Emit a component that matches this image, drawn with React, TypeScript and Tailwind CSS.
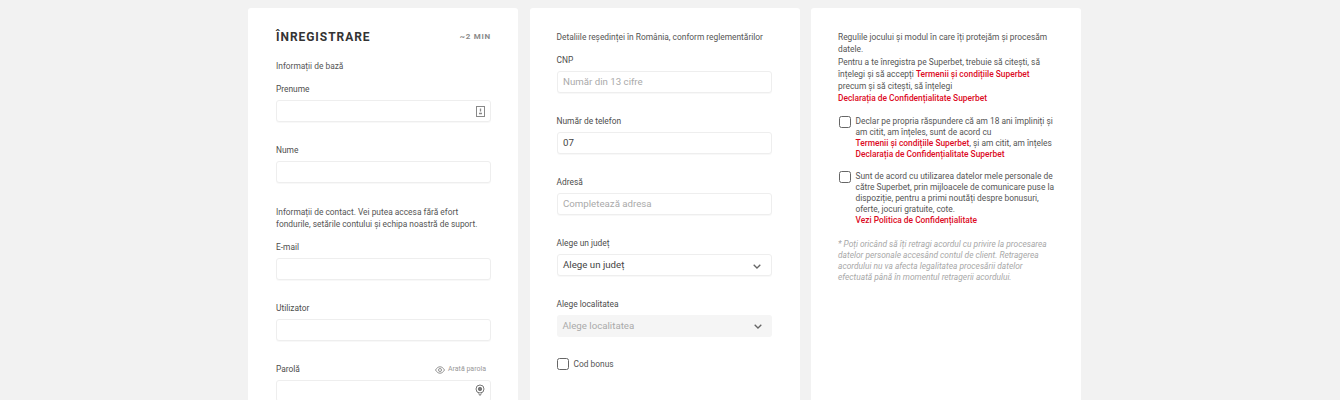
import React from "react";

const inputBase = "flex h-[22px] w-[215px] items-center rounded-[3px] border border-[#eeeeee] bg-white px-[5.5px] text-[9.7px] shadow-[0_1px_1px_rgba(0,0,0,0.03)]";
const labelBase = "mb-[5px] mt-[1px] flex h-[11px] items-center text-[8.4px] leading-[11px] text-[#4d4d4d]";

function Chevron() {
  return (
    <svg width="8" height="5" viewBox="0 0 8 5" className="absolute right-[10px] top-[8.5px]" fill="none" stroke="#666" strokeWidth="1.3">
      <path d="M0.7 0.7L4 4l3.300-3.300" />
    </svg>
  );
}

function Field({ label, children }: { label: string; children?: React.ReactNode }) {
  return (
    <div className="flex h-[61px] w-[215px] flex-col">
      <div className={labelBase}>{label}</div>
      <div className={"relative " + inputBase}>{children}</div>
    </div>
  );
}

function Red({ children }: { children: React.ReactNode }) {
  return <span className="font-medium text-[#dc0a24]">{children}</span>;
}

function Check() {
  return <span className="block h-[11.5px] w-[11.5px] shrink-0 rounded-[2.5px] border-[1.2px] border-[#666] bg-white" />;
}

export default function App() {
  return (
    <div className="h-[400px] w-[1340px] overflow-hidden bg-[#f2f2f2] font-['Roboto',sans-serif]">
      <div className="flex items-start gap-[11.5px] pl-[248px] pt-[8px]">
        {/* Card 1 */}
        <section className="h-[420px] w-[270px] rounded-[3px] bg-white pl-[28px] pt-[22px]">
          <div className="flex h-[14px] w-[215px] items-center justify-between">
            <h1 className="text-[12px] font-bold leading-[14px] tracking-[0.95px] text-[#333]">ÎNREGISTRARE</h1>
            <span className="text-[8px] font-bold tracking-[0.75px] text-[#8a8a8a]">~2 MIN</span>
          </div>
          <p className="mt-[17px] h-[11px] text-[8.4px] leading-[11px] text-[#555]">Informații de bază</p>
          <div className="mt-[11px]">
            <Field label="Prenume">
              <svg width="9" height="11" viewBox="0 0 9 11" className="absolute right-[5.500px] top-[4.500px]" fill="none" stroke="#888" strokeWidth="1">
                <rect x="0.5" y="0.5" width="8" height="10" />
                <path d="M4.500 2.500v3M3 7.500h3" strokeWidth="1.300" />
              </svg>
            </Field>
            <Field label="Nume" />
          </div>
          <p className="h-[24px] w-[215px] pt-[1px] text-[8.4px] leading-[12px] text-[#555]">
            Informații de contact. Vei putea accesa fără efort
            <br />
            fondurile, setările contului și echipa noastră de suport.
          </p>
          <div className="mt-[12px]">
            <Field label="E-mail" />
            <Field label="Utilizator" />
            <div className="relative w-[215px]">
              <span className="absolute right-[5px] top-[1px] flex h-[11px] items-center gap-[3px] text-[7px] text-[#999]">
                <svg width="10" height="8" viewBox="0 0 10 8" fill="none" stroke="#888" strokeWidth="0.9">
                  <path d="M0.5 4C2 1.500 3.500 0.800 5 0.800S8 1.500 9.500 4C8 6.500 6.500 7.200 5 7.200S2 6.500 0.500 4Z" />
                  <circle cx="5" cy="4" r="1.500" />
                </svg>
                Arată parola
              </span>
              <Field label="Parolă">
                <svg width="10" height="12" viewBox="0 0 10 12" className="absolute right-[5px] top-[3px]" fill="none" stroke="#777" strokeWidth="1">
                  <circle cx="5" cy="5" r="4" />
                  <circle cx="5" cy="5" r="1.700" fill="#777" />
                  <path d="M3.500 9.500L5 11.500l1.500-2" />
                </svg>
              </Field>
            </div>
          </div>
        </section>

        {/* Card 2 */}
        <section className="h-[420px] w-[270px] rounded-[3px] bg-white pl-[27px] pt-[24px]">
          <p className="h-[11px] text-[8.4px] leading-[11px] text-[#555]">Detaliile reședinței în România, conform reglementărilor</p>
          <div className="mt-[11px]">
            <Field label="CNP"><span className="text-[#aaa]">Număr din 13 cifre</span></Field>
            <Field label="Număr de telefon"><span className="text-[#444]">07</span></Field>
            <Field label="Adresă"><span className="text-[#aaa]">Completează adresa</span></Field>
            <Field label="Alege un județ">
              <span className="text-[#444]">Alege un județ</span>
              <Chevron />
            </Field>
            <div className="flex h-[61px] w-[215px] flex-col">
              <div className={labelBase}>Alege localitatea</div>
              <div className="relative flex h-[22px] w-[215px] items-center rounded-[3px] bg-[#f5f5f5] px-[6px] text-[9.7px] text-[#aaa]">
                Alege localitatea
                <Chevron />
              </div>
            </div>
          </div>
          <label className="mt-[-1px] flex items-center gap-[5px] text-[8.4px] leading-[11px] text-[#555]">
            <span className="block h-[12px] w-[12px] rounded-[2.5px] border-[1.2px] border-[#666]" />
            Cod bonus
          </label>
        </section>

        {/* Card 3 */}
        <section className="h-[420px] w-[270px] rounded-[3px] bg-white pl-[27px] pt-[23px]">
          <p className="whitespace-nowrap text-[8.4px] leading-[12.300px] text-[#555]">
            Regulile jocului și modul în care îți protejăm și procesăm
            <br />
            datele.
            <br />
            Pentru a te înregistra pe Superbet, trebuie să citești, să
            <br />
            înțelegi și să accepți <Red>Termenii și condițiile Superbet</Red>
            <br />
            precum și să citești, să înțelegi
            <br />
            <Red>Declarația de Confidențialitate Superbet</Red>
          </p>
          <div className="mt-[11.500px] flex gap-[5px] pl-[1px]">
            <Check />
            <p className="whitespace-nowrap text-[8.4px] leading-[11px] text-[#555]">
              Declar pe propria răspundere că am 18 ani împliniți și
              <br />
              am citit, am înțeles, sunt de acord cu
              <br />
              <Red>Termenii și condițiile Superbet</Red>, și am citit, am înțeles
              <br />
              <Red>Declarația de Confidențialitate Superbet</Red>
            </p>
          </div>
          <div className="mt-[11px] flex gap-[5px] pl-[1px]">
            <Check />
            <p className="whitespace-nowrap text-[8.4px] leading-[11px] text-[#555]">
              Sunt de acord cu utilizarea datelor mele personale de
              <br />
              către Superbet, prin mijloacele de comunicare puse la
              <br />
              dispoziție, pentru a primi noutăți despre bonusuri,
              <br />
              oferte, jocuri gratuite, cote.
              <br />
              <Red>Vezi Politica de Confidențialitate</Red>
            </p>
          </div>
          <p className="mt-[13px] whitespace-nowrap text-[8.4px] italic leading-[11px] text-[#a8a8a8]">
            * Poți oricând să îți retragi acordul cu privire la procesarea
            <br />
            datelor personale accesând contul de client. Retragerea
            <br />
            acordului nu va afecta legalitatea procesării datelor
            <br />
            efectuată până în momentul retragerii acordului.
          </p>
        </section>
      </div>
    </div>
  );
}
